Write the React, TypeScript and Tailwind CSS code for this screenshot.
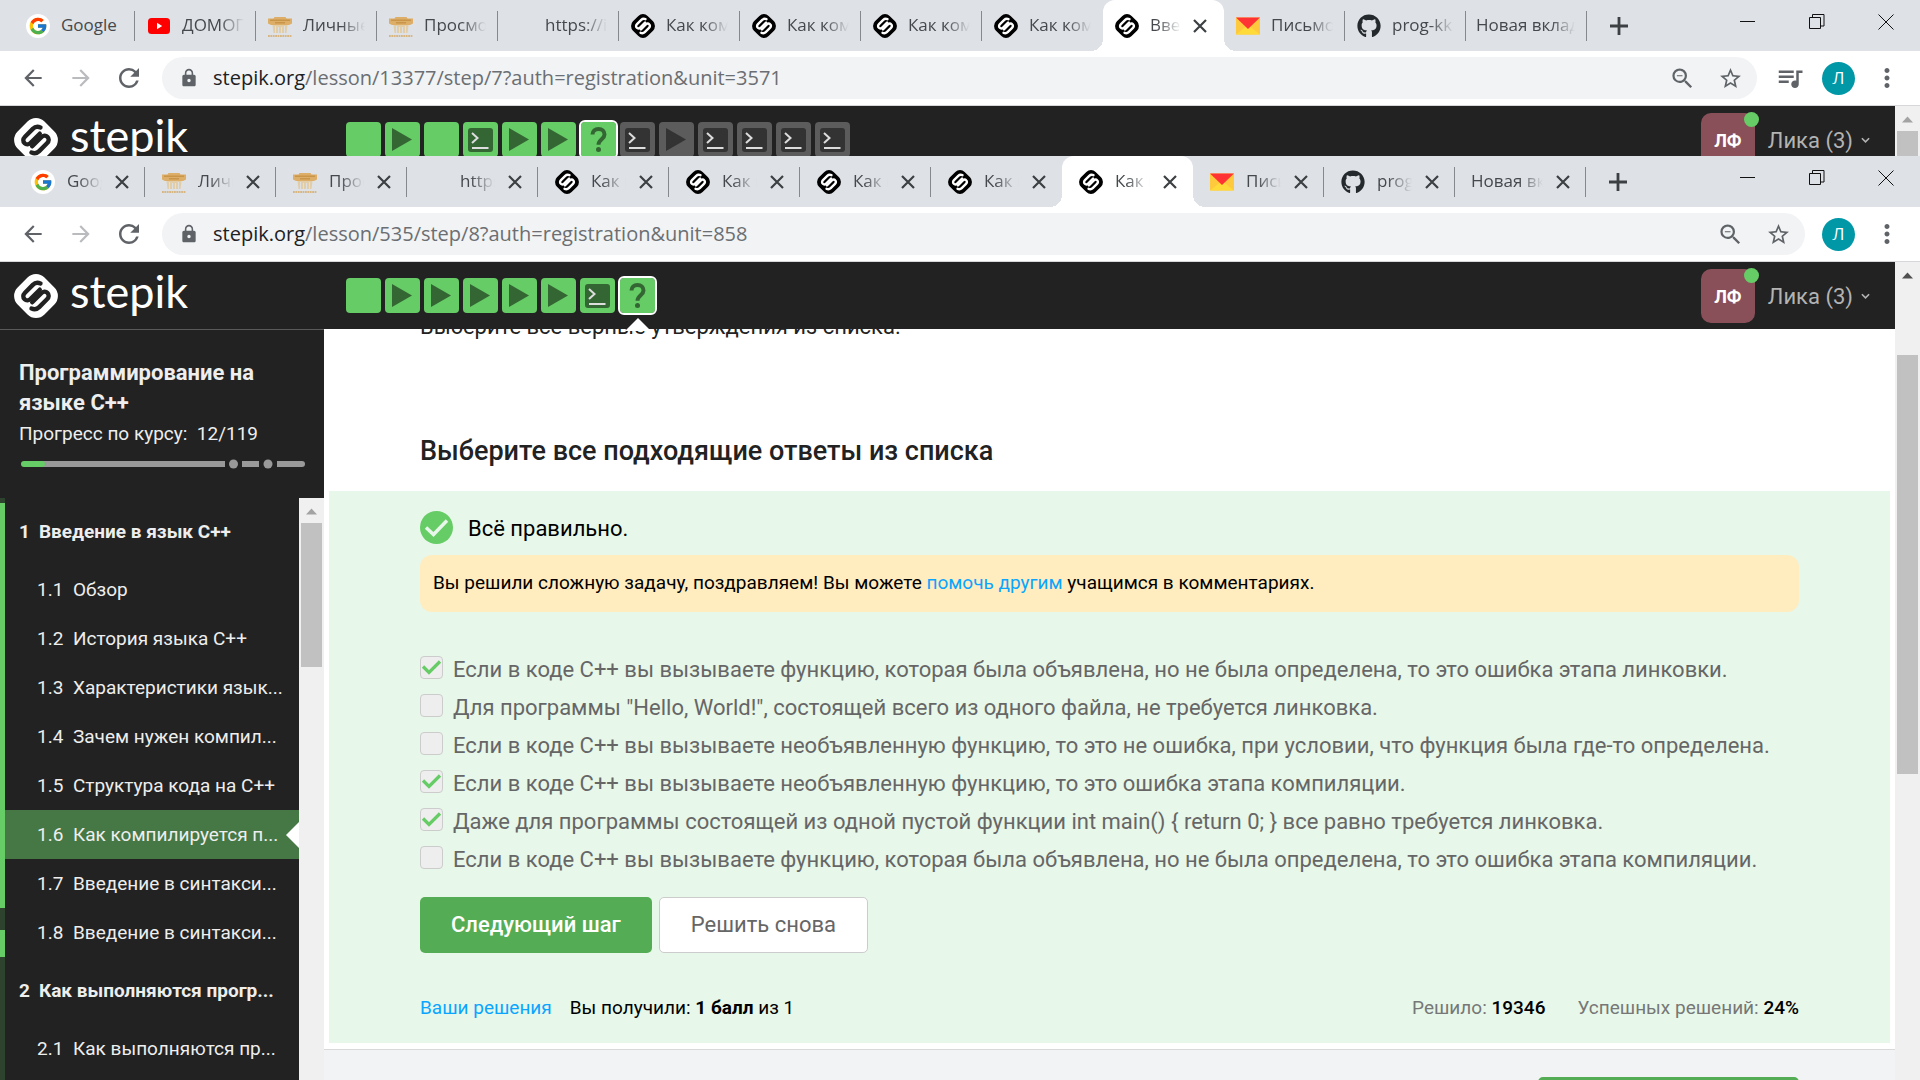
import type { ReactNode } from "react";
import {
  MdArrowBack,
  MdArrowForward,
  MdLock,
  MdMoreVert,
  MdQueueMusic,
  MdRefresh,
  MdStarBorder,
  MdZoomOut,
} from "react-icons/md";
import { FcGoogle } from "react-icons/fc";
import { FaGithub } from "react-icons/fa";

type Favicon = "google" | "youtube" | "school" | "blank" | "stepik" | "mail" | "github" | "none";
type Tab = { icon: Favicon; title: string; active?: boolean; fits?: boolean };
type Step = { kind: "text" | "video" | "code" | "quiz"; done: boolean; current?: boolean };

function StepikMark({ className, light }: { className: string; light?: boolean }) {
  const body = light ? "#ffffff" : "#000000";
  const line = light ? "#222222" : "#ffffff";
  return (
    <svg viewBox="0 0 44 44" className={className} aria-hidden="true">
      <rect x="3" y="3" width="38" height="38" rx="12" transform="rotate(45 22 22)" fill={body} />
      <g fill="none" stroke={line} strokeWidth="4.4" strokeLinecap="round" strokeLinejoin="round">
        <path d="M26.5 9.5C23.5 8.3 20.8 8.9 18.8 10.9L11 18.7C8.8 20.9 8.8 23.5 10.6 25.2C12.3 26.9 14.8 26.7 16.7 24.8L25.8 15.7" />
        <path d="M17.5 34.5C20.5 35.7 23.2 35.1 25.2 33.1L33 25.3C35.2 23.1 35.2 20.5 33.4 18.8C31.7 17.1 29.2 17.3 27.3 19.2L18.2 28.3" />
      </g>
    </svg>
  );
}

function FaviconImage({ icon }: { icon: Favicon }) {
  switch (icon) {
    case "google":
      return (
        <span className="flex size-6 shrink-0 items-center justify-center rounded-full bg-white">
          <FcGoogle className="size-5" />
        </span>
      );
    case "youtube":
      return (
        <svg viewBox="0 0 24 24" className="size-6 shrink-0" aria-hidden="true">
          <rect x="1" y="4" width="22" height="16" rx="3.5" fill="#ff0000" />
          <path d="M10 8.8v6.4l5.200-3.200z" fill="#fff" />
        </svg>
      );
    case "school":
      return (
        <svg viewBox="0 0 24 24" className="size-6 shrink-0" aria-hidden="true">
          <path d="M0 4.500h5.500l1-1.500h11l1 1.500H24v5l-3 1.500H3l-3-1.500z" fill="#dcae68" />
          <path d="M2 5.500h20v1.500H2zM7 8h10v1.500H7z" fill="#c99549" />
          <path d="M4.500 11h15l-1 8h-13z" fill="#e2cda9" />
          <path d="M7.500 12v7M10.500 13v6M13.500 13v6M16.500 12v7" stroke="#dee1e6" strokeWidth="0.9" />
          <path d="M0 22h24" stroke="#d8b682" strokeWidth="2" strokeDasharray="1.800 0.600" />
        </svg>
      );
    case "stepik":
      return <StepikMark className="size-6 shrink-0" />;
    case "mail":
      return (
        <svg viewBox="0 0 24 24" className="size-6 shrink-0" aria-hidden="true">
          <path d="M0 3.500h24v17H0z" fill="#ffc93e" />
          <path d="M0 20.500l12-9.500 12 9.500z" fill="#ffdb3a" />
          <path d="M0 3.500h24L12 15z" fill="#ff3333" />
        </svg>
      );
    case "github":
      return <FaGithub className="size-6 shrink-0 text-[#24292e]" />;
    default:
      return <span className="size-6 shrink-0" />;
  }
}

function CloseGlyph({ className }: { className: string }) {
  return (
    <svg viewBox="0 0 16 16" className={className} stroke="currentColor" aria-hidden="true">
      <path d="M2 2l12 12M14 2L2 14" strokeWidth="2.2" />
    </svg>
  );
}

function BrowserTab({ tab, closable }: { tab: Tab; closable: boolean }) {
  const width = closable ? "w-[131px]" : "w-[121px]";
  const shape = tab.active ? "rounded-t-xl bg-white" : "";
  const showClose = closable || tab.active;
  const gap = closable ? "gap-3" : "gap-[11px]";
  const lead = tab.icon === "none" ? (closable ? "pl-4" : "pl-[10px]") : closable ? "pl-[17px]" : "pl-3";
  const trail = showClose ? (closable ? "pr-[15px]" : "pr-4") : "pr-3";
  const fade = tab.fits ? "" : "[mask-image:linear-gradient(to_right,#000_calc(100%-24px),transparent)]";
  return (
    <div className={`relative flex h-[51px] items-center ${width} ${shape} ${gap} ${lead} ${trail}`}>
      {tab.icon !== "none" && <FaviconImage icon={tab.icon} />}
      <button
        className={`-mt-0.5 min-w-0 flex-1 overflow-hidden text-left text-[17px] leading-6 whitespace-nowrap text-[#45494d] ${fade}`}
      >
        {tab.title}
      </button>
      {showClose && (
        <button
          aria-label="Закрыть вкладку"
          className="flex size-4 shrink-0 items-center justify-center text-[#3c4043]"
        >
          <CloseGlyph className="size-4" />
        </button>
      )}
      {tab.active && (
        <>
          <span className="absolute bottom-0 -left-3 size-3 bg-[radial-gradient(circle_at_0_0,transparent_12px,white_12px)]" />
          <span className="absolute -right-3 bottom-0 size-3 bg-[radial-gradient(circle_at_100%_0,transparent_12px,white_12px)]" />
        </>
      )}
    </div>
  );
}

function TabStrip({ tabs, closable }: { tabs: Tab[]; closable: boolean }) {
  return (
    <div className="flex h-[51px] items-center bg-[#dee1e6] pl-[14px]">
      {tabs.map((tab, i) => {
        const divider = !tab.active && !tabs[i + 1]?.active;
        return (
          <div key={i} className="relative flex items-center">
            <BrowserTab tab={tab} closable={closable} />
            {divider && <span className="absolute right-0 h-[30px] w-px bg-[#85888c]" />}
          </div>
        );
      })}
      <button aria-label="Новая вкладка" className="ml-[23px] flex size-[18px] items-center justify-center text-[#3c4043]">
        <svg viewBox="0 0 18 18" className="size-[18px]" stroke="currentColor" aria-hidden="true">
          <path d="M9 0v18M0 9h18" strokeWidth="2.8" />
        </svg>
      </button>
      <div className="-mt-2 ml-auto flex items-center gap-[53px] pr-[26px]">
        <button aria-label="Свернуть">
          <svg viewBox="0 0 16 16" className="size-4" stroke="#111" aria-hidden="true">
            <path d="M0 7.500h15" />
          </svg>
        </button>
        <button aria-label="Восстановить">
          <svg viewBox="0 0 16 16" className="size-4" stroke="#111" fill="none" aria-hidden="true">
            <path d="M0.500 3.500h11v11h-11zM3.500 3.500v-3h11.500v11.500h-3.500" />
          </svg>
        </button>
        <button aria-label="Закрыть">
          <svg viewBox="0 0 16 16" className="size-4" stroke="#111" aria-hidden="true">
            <path d="M0.500 0.500l15 15M15.500 0.500l-15 15" />
          </svg>
        </button>
      </div>
    </div>
  );
}

function AddressBar({ path, label, media }: { path: string; label: string; media?: boolean }) {
  return (
    <div className="flex h-[55px] items-center border-b border-[#d5d7da] bg-white pr-[18px] pl-5 text-[#5f6368]">
      <button aria-label="Назад" className="mr-[22px]">
        <MdArrowBack className="size-[26px]" />
      </button>
      <button aria-label="Вперёд" className="mr-5 text-[#b9bbbe]">
        <MdArrowForward className="size-[26px]" />
      </button>
      <button aria-label="Обновить" className="mr-[18px]">
        <MdRefresh className="size-[30px]" />
      </button>
      <div className="flex h-[42px] flex-1 items-center rounded-full bg-[#f1f3f4] pr-3 pl-[17px]">
        <MdLock className="mr-[14px] size-5" />
        <a href="#" aria-label={label} className="flex-1 text-xl leading-7 text-[#6b6e72]">
          <span className="text-[#202124]">stepik.org</span>
          {path}
        </a>
        <button aria-label="Масштаб" className="mr-[22px]">
          <MdZoomOut className="size-[27px]" />
        </button>
        <button aria-label="Добавить в закладки" className="mr-[2px]">
          <MdStarBorder className="size-[25px]" />
        </button>
      </div>
      {media && (
        <button aria-label="Мультимедиа" className="ml-[18px]">
          <MdQueueMusic className="size-[30px]" />
        </button>
      )}
      <button className="ml-[17px] flex size-[33px] items-center justify-center rounded-full bg-[#0097a7] text-[17px] text-white">
        Л
      </button>
      <button aria-label="Меню" className="ml-[17px]">
        <MdMoreVert className="size-[30px]" />
      </button>
    </div>
  );
}

function StepIcon({ step }: { step: Step }) {
  const ink = step.done ? "#336633" : "#333333";
  if (step.kind === "video") {
    return (
      <svg viewBox="0 0 35 35" className="size-[35px]" aria-hidden="true">
        <path d="M7 6l20 11.500L7 29z" fill={ink} />
      </svg>
    );
  }
  if (step.kind === "code") {
    return (
      <svg viewBox="0 0 35 35" className="size-[35px]" aria-hidden="true">
        <rect x="5" y="6" width="25" height="24" rx="3" fill={ink} />
        <path d="M9 11l5.500 5L9 21M9 26h16.500" fill="none" stroke="#dddddd" strokeWidth="2" />
      </svg>
    );
  }
  if (step.kind === "quiz") {
    return (
      <svg viewBox="0 0 35 35" className="size-[35px]" aria-hidden="true">
        <path
          d="M11.500 12.500c0-3.500 2.500-5.500 6-5.500s6 2 6 5.400c0 4.800-6 4.800-6 10.300"
          fill="none"
          stroke={ink}
          strokeWidth="4"
        />
        <circle cx="17.5" cy="27.5" r="2.5" fill={ink} />
      </svg>
    );
  }
  return null;
}

function CourseHeader({ steps, pointer }: { steps: Step[]; pointer?: boolean }) {
  return (
    <header className="flex h-[67px] shrink-0 items-start bg-[#222222] pr-[25px] pl-[14px] font-['Roboto',sans-serif]">
      <a href="#" className="mt-3 flex w-[332px] items-start gap-3 text-white">
        <StepikMark className="size-11" light />
        <span className="-mt-[5px] font-['Lato',sans-serif] text-[45px] leading-[44px]">stepik</span>
      </a>
      <nav aria-label="Шаги урока" className="mt-4 flex gap-1">
        {steps.map((step, i) => (
          <a
            key={i}
            href="#"
            aria-label={`Шаг ${i + 1}`}
            className={`relative flex size-[35px] items-center justify-center rounded ${
              step.done ? "bg-[#66cc66]" : "bg-[#5c5c5c]"
            } ${step.current ? "ml-px outline-2 outline-white" : ""}`}
          >
            <StepIcon step={step} />
            {step.current && pointer && (
              <svg
                viewBox="0 0 26 14"
                className="absolute top-10 left-[5px] z-10 h-[14px] w-[26px]"
                aria-hidden="true"
              >
                <path d="M13 0l13 13H0z" fill="#fff" />
              </svg>
            )}
          </a>
        ))}
      </nav>
      <button className="mt-[7px] ml-auto flex items-center gap-[13px] text-[#b3b3b3]">
        <span className="relative flex size-[54px] items-center justify-center rounded-[10px] bg-[#895059] text-[18px] font-bold text-white">
          ЛФ
          <span className="absolute -top-px -right-1 size-[15px] rounded-full bg-[#66cc66]" />
        </span>
        <span className="flex items-center gap-2 pt-px text-[22px] leading-7">
          Лика (3)
          <svg viewBox="0 0 10 8" className="size-[9px]" aria-hidden="true">
            <path d="M1 1.500l4 4 4-4" fill="none" stroke="currentColor" strokeWidth="1.8" />
          </svg>
        </span>
      </button>
    </header>
  );
}

function Scrollbar({ arrow, thumb }: { arrow: string; thumb: ReactNode }) {
  return (
    <div className="flex w-[25px] shrink-0 flex-col items-center bg-[#f0f0f0]">
      <svg viewBox="0 0 25 25" className="size-[25px] shrink-0" aria-hidden="true">
        <path d="M7 16.500l5.500-6 5.500 6z" fill={arrow} />
      </svg>
      {thumb}
    </div>
  );
}

const upperTabs: Tab[] = [
  { icon: "google", title: "Google", fits: true },
  { icon: "youtube", title: "ДОМОГ" },
  { icon: "school", title: "Личные" },
  { icon: "school", title: "Просмо" },
  { icon: "blank", title: "https://i" },
  { icon: "stepik", title: "Как ком" },
  { icon: "stepik", title: "Как ком" },
  { icon: "stepik", title: "Как ком" },
  { icon: "stepik", title: "Как ком" },
  { icon: "stepik", title: "Введ", active: true },
  { icon: "mail", title: "Письмо" },
  { icon: "github", title: "prog-kk" },
  { icon: "none", title: "Новая вклад" },
];

const lowerTabs: Tab[] = [
  { icon: "google", title: "Goog" },
  { icon: "school", title: "Личн" },
  { icon: "school", title: "Прос" },
  { icon: "blank", title: "https" },
  { icon: "stepik", title: "Как к" },
  { icon: "stepik", title: "Как к" },
  { icon: "stepik", title: "Как к" },
  { icon: "stepik", title: "Как к" },
  { icon: "stepik", title: "Как к", active: true },
  { icon: "mail", title: "Пись" },
  { icon: "github", title: "prog" },
  { icon: "none", title: "Новая вк" },
];

const upperSteps: Step[] = [
  { kind: "text", done: true },
  { kind: "video", done: true },
  { kind: "text", done: true },
  { kind: "code", done: true },
  { kind: "video", done: true },
  { kind: "video", done: true },
  { kind: "quiz", done: true, current: true },
  { kind: "code", done: false },
  { kind: "video", done: false },
  { kind: "code", done: false },
  { kind: "code", done: false },
  { kind: "code", done: false },
  { kind: "code", done: false },
];

const lowerSteps: Step[] = [
  { kind: "text", done: true },
  { kind: "video", done: true },
  { kind: "video", done: true },
  { kind: "video", done: true },
  { kind: "video", done: true },
  { kind: "video", done: true },
  { kind: "code", done: true },
  { kind: "quiz", done: true, current: true },
];

const sections = [
  {
    number: "1",
    title: "Введение в язык C++",
    lessons: [
      { number: "1.1", title: "Обзор" },
      { number: "1.2", title: "История языка C++" },
      { number: "1.3", title: "Характеристики язык..." },
      { number: "1.4", title: "Зачем нужен компил..." },
      { number: "1.5", title: "Структура кода на C++" },
      { number: "1.6", title: "Как компилируется п...", current: true },
      { number: "1.7", title: "Введение в синтакси..." },
      { number: "1.8", title: "Введение в синтакси..." },
    ],
  },
  {
    number: "2",
    title: "Как выполняются прогр...",
    lessons: [{ number: "2.1", title: "Как выполняются пр..." }],
  },
];

function Sidebar() {
  return (
    <aside className="flex w-[324px] shrink-0 flex-col border-t border-[#5a5a5a] bg-[#222222] text-[#eeeeee]">
      <div className="h-[168px] shrink-0 px-[19px] pt-7">
        <h1 className="text-[22px] leading-[30px] font-bold">Программирование на языке C++</h1>
        <p className="mt-0.5 text-[19px] leading-7 whitespace-pre">Прогресс по курсу:  12/119</p>
        <svg viewBox="0 0 288 12" className="mt-2.5 h-3 w-[288px]" aria-hidden="true">
          <g stroke="#999999" strokeWidth="6">
            <path d="M10 6h196M223 6h17" />
            <path d="M258 6h24" />
            <path d="M280 6h3" strokeLinecap="round" />
          </g>
          <path d="M5 6h18" stroke="#66cc66" strokeWidth="6" strokeLinecap="round" />
          <circle cx="214.5" cy="6" r="4.5" fill="#999999" />
          <circle cx="249" cy="6" r="4.5" fill="#999999" />
        </svg>
      </div>
      <div className="flex min-h-0 flex-1">
        <div className="flex w-[5px] shrink-0 flex-col bg-[#2d432d]">
          <span className="mt-[5px] h-[405px] bg-[#66cc66]" />
          <span className="mt-[22px] h-[27px] bg-[#66cc66]" />
        </div>
        <nav aria-label="Содержание курса" className="min-w-0 flex-1 overflow-hidden">
          {sections.map((section) => (
            <div key={section.number}>
              <h2 className="flex h-[67px] items-center gap-[9px] pt-px pl-[14px] text-[19px] font-bold whitespace-nowrap">
                <span>{section.number}</span>
                <span>{section.title}</span>
              </h2>
              {section.lessons.map((lesson) => {
                const current = "current" in lesson;
                return (
                  <a
                    key={lesson.number}
                    href="#"
                    className={`flex h-[49px] items-center overflow-hidden pt-px pl-8 text-[19px] whitespace-nowrap ${
                      current ? "bg-[#457845]" : ""
                    }`}
                  >
                    <span className="w-9">{lesson.number}</span>
                    <span>{lesson.title}</span>
                    {current && (
                      <svg viewBox="0 0 13 26" className="ml-auto h-[26px] w-[13px]" aria-hidden="true">
                        <path d="M13 0v26L0 13z" fill="#fff" />
                      </svg>
                    )}
                  </a>
                );
              })}
            </div>
          ))}
        </nav>
        <Scrollbar arrow="#a3a3a3" thumb={<span className="h-36 w-[21px] bg-[#c1c1c1]" />} />
      </div>
    </aside>
  );
}

const answers = [
  {
    text: "Если в коде C++ вы вызываете функцию, которая была объявлена, но не была определена, то это ошибка этапа линковки.",
    checked: true,
  },
  { text: 'Для программы "Hello, World!", состоящей всего из одного файла, не требуется линковка.', checked: false },
  {
    text: "Если в коде C++ вы вызываете необъявленную функцию, то это не ошибка, при условии, что функция была где-то определена.",
    checked: false,
  },
  { text: "Если в коде C++ вы вызываете необъявленную функцию, то это ошибка этапа компиляции.", checked: true },
  {
    text: "Даже для программы состоящей из одной пустой функции int main() { return 0; } все равно требуется линковка.",
    checked: true,
  },
  {
    text: "Если в коде C++ вы вызываете функцию, которая была объявлена, но не была определена, то это ошибка этапа компиляции.",
    checked: false,
  },
];

function Answer({ text, checked }: { text: string; checked: boolean }) {
  return (
    <label className="flex h-[38px] items-center gap-[10px] text-[22px] whitespace-nowrap text-[#666666]">
      <span className="relative -mt-1 size-[23px] shrink-0">
        <input
          type="checkbox"
          defaultChecked={checked}
          className="block size-[23px] appearance-none rounded border border-[#cccccc] bg-[#eeeeee]"
        />
        {checked && (
          <svg viewBox="0 0 23 23" className="pointer-events-none absolute inset-0 size-[23px]" aria-hidden="true">
            <path d="M3 10.500l6 6L20 5.500" fill="none" stroke="#66cc66" strokeWidth="3.2" />
          </svg>
        )}
      </span>
      <span>{text}</span>
    </label>
  );
}

function Quiz() {
  return (
    <main className="flex min-w-0 flex-1 flex-col overflow-hidden bg-white text-[#222222]">
      <p className="-mt-4 ml-24 text-[22px] leading-7 whitespace-nowrap">
        Выберите все верные утверждения из списка.
      </p>
      <h2 className="mt-[94px] ml-24 text-[27px] leading-8 font-medium">Выберите все подходящие ответы из списка</h2>
      <section className="mx-[5px] mt-6 h-[552px] shrink-0 bg-[#e7f7e9] px-[91px] text-black">
        <div className="flex h-16 items-center gap-[15px] pt-2">
          <svg viewBox="0 0 33 33" className="size-[33px]" aria-hidden="true">
            <circle cx="16.5" cy="16.5" r="16.5" fill="#66cc66" />
            <path d="M6 16.500l7.500 7L27 9.500" fill="none" stroke="#e7f7e9" strokeWidth="3.5" />
          </svg>
          <span className="pt-1 text-[22px] leading-7">Всё правильно.</span>
        </div>
        <p className="rounded-xl bg-[#ffecbf] px-[13px] pt-[13px] pb-[15px] text-[19px] leading-[29px]">
          Вы решили сложную задачу, поздравляем! Вы можете{" "}
          <a href="#" className="text-[#0aa5ff]">
            помочь другим
          </a>{" "}
          учащимся в комментариях.
        </p>
        <div className="mt-[38px]">
          {answers.map((answer, i) => (
            <Answer key={i} {...answer} />
          ))}
        </div>
        <div className="mt-[19px] flex gap-[7px] text-[22px]">
          <button className="h-14 rounded-[5px] bg-[#54ad54] px-[31px] pb-0.5 font-medium text-white">
            Следующий шаг
          </button>
          <button className="h-14 rounded-[5px] border border-[#cccccc] bg-white px-[31px] pb-0.5 text-[#666666]">
            Решить снова
          </button>
        </div>
        <div className="mt-[41px] flex items-center text-[19px] leading-7">
          <a href="#" className="mr-[18px] text-[#0aa5ff]">
            Ваши решения
          </a>
          <span>
            Вы получили: <b className="font-bold">1 балл</b> из 1
          </span>
          <span className="ml-auto text-[#777777]">
            Решило: <b className="font-medium text-black">19346</b>
          </span>
          <span className="ml-8 text-[#777777]">
            Успешных решений: <b className="font-medium text-black">24%</b>
          </span>
        </div>
      </section>
      <footer className="mt-1.5 flex flex-1 justify-end border-t border-[#d9d9d9] bg-[#f2f3f5] pr-24">
        <button aria-label="Следующий шаг" className="mt-[27px] h-14 w-[261px] rounded-[5px] bg-[#54ad54]" />
      </footer>
    </main>
  );
}

export default function App() {
  return (
    <div className="flex h-screen flex-col overflow-hidden font-['Open_Sans','Noto_Sans',sans-serif]">
      <section className="h-[156px] shrink-0 overflow-hidden">
        <TabStrip tabs={upperTabs} closable={false} />
        <AddressBar
          label="stepik.org/lesson/13377/step/7?auth=registration&unit=3571"
          path="/lesson/13377/step/7?auth=registration&unit=3571"
          media
        />
        <div className="flex">
          <div className="min-w-0 flex-1">
            <CourseHeader steps={upperSteps} />
          </div>
          <Scrollbar arrow="#a3a3a3" thumb={<span className="w-[21px] flex-1 bg-[#c1c1c1]" />} />
        </div>
      </section>
      <section className="flex min-h-0 flex-1 flex-col">
        <TabStrip tabs={lowerTabs} closable />
        <AddressBar
          label="stepik.org/lesson/535/step/8?auth=registration&unit=858"
          path="/lesson/535/step/8?auth=registration&unit=858"
        />
        <div className="flex min-h-0 flex-1">
          <div className="flex min-w-0 flex-1 flex-col">
            <CourseHeader steps={lowerSteps} pointer />
            <div className="flex min-h-0 flex-1 font-['Roboto',sans-serif]">
              <Sidebar />
              <Quiz />
            </div>
          </div>
          <Scrollbar arrow="#505050" thumb={<span className="mt-[68px] h-[419px] w-[21px] bg-[#c1c1c1]" />} />
        </div>
      </section>
    </div>
  );
}
